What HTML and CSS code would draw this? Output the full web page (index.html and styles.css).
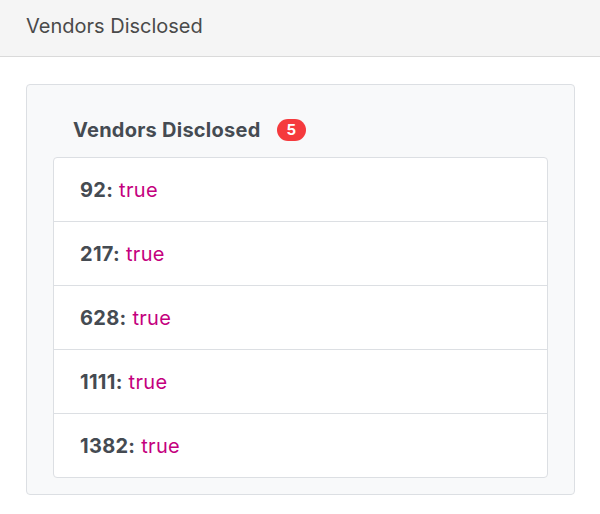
FILE: index.html
```html
<!DOCTYPE html>
<html>
<head>
<meta charset="utf-8">
<link rel="stylesheet" href="styles.css">
</head>
<body>
<div class="header">Vendors Disclosed</div>
<div class="card">
  <div class="title"><span>Vendors Disclosed</span><span class="badge">5</span></div>
  <ul class="list">
    <li class="row"><span><span class="key">92:</span> <span class="val">true</span></span></li>
    <li class="row"><span><span class="key">217:</span> <span class="val">true</span></span></li>
    <li class="row"><span><span class="key">628:</span> <span class="val">true</span></span></li>
    <li class="row"><span><span class="key">1111:</span> <span class="val">true</span></span></li>
    <li class="row"><span><span class="key">1382:</span> <span class="val">true</span></span></li>
  </ul>
</div>
</body>
</html>
```
FILE: styles.css
```css
html, body {
  margin: 0;
  padding: 0;
  background: #ffffff;
  font-family: Inter, "Liberation Sans", Arial, sans-serif;
  color: #495057;
}
.header {
  height: 57px;
  box-sizing: border-box;
  background: #f5f5f5;
  border-bottom: 1px solid #dadada;
  padding-left: 26px;
  font-size: 20px;
  line-height: 52px;
  color: #4a4a4a;
}
.card {
  margin: 27px 25px 0 26px;
  background: #f8f9fa;
  border: 1px solid #dcdfe3;
  border-radius: 4px;
  padding: 33px 26px 16px 26px;
}
.title {
  display: flex;
  align-items: center;
  padding-left: 20px;
  height: 24px;
  margin-bottom: 15px;
  font-size: 20px;
  font-weight: bold;
  letter-spacing: 0.25px;
  color: #454b52;
}
.badge {
  margin-left: 16px;
  background: #f53a3d;
  color: #fff;
  font-size: 15px;
  font-weight: bold;
  letter-spacing: 0;
  height: 22px;
  line-height: 22px;
  padding: 0 10px;
  border-radius: 11px;
}
.list {
  list-style: none;
  margin: 0;
  padding: 0;
  background: #fff;
  border: 1px solid #dcdfe3;
  border-radius: 4px;
}
.row {
  height: 63px;
  display: flex;
  align-items: center;
  padding-left: 26px;
  font-size: 20px;
  letter-spacing: 0.3px;
  border-top: 1px solid #dcdfe3;
}
.row:first-child {
  border-top: none;
}
.key {
  font-weight: bold;
  color: #454b52;
}
.val {
  color: #c4007e;
}
```
